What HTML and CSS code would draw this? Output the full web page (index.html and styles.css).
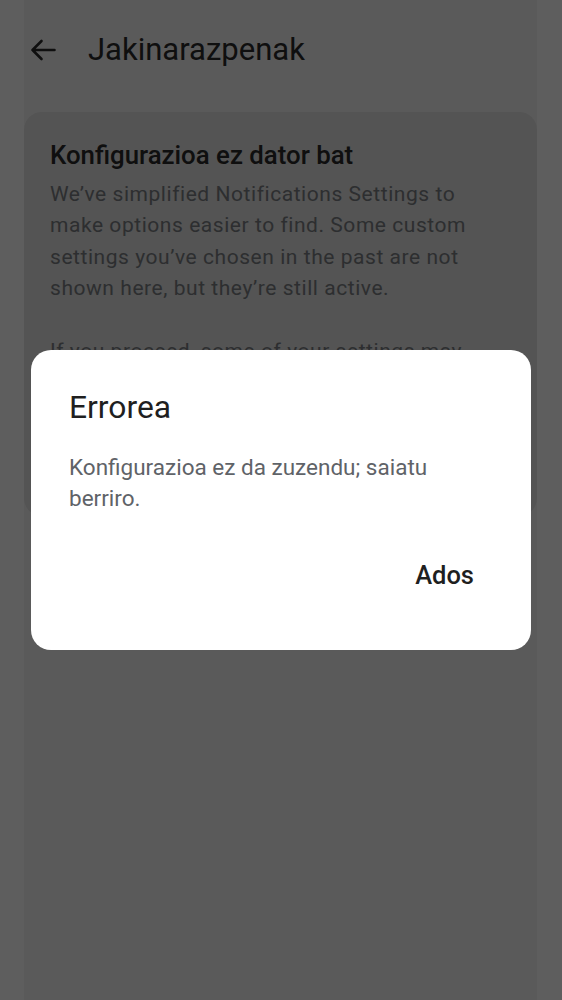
FILE: index.html
```html
<!DOCTYPE html>
<html lang="eu">
<head>
<meta charset="utf-8">
<title>Jakinarazpenak</title>
<link rel="stylesheet" href="styles.css">
</head>
<body>
<div class="column">
  <header class="appbar">
    <span class="back">
      <svg width="26" height="22" viewBox="0 0 26 22" aria-hidden="true">
        <path d="M24.5 11H2.5M11.5 2L2.5 11L11.5 20" fill="none" stroke="currentColor" stroke-width="2.6" stroke-linecap="round" stroke-linejoin="round"/>
      </svg>
    </span>
    <h1 class="appbar-title">Jakinarazpenak</h1>
  </header>
  <section class="card">
    <h2 class="card-title">Konfigurazioa ez dator bat</h2>
    <p class="card-text">We’ve simplified Notifications Settings to make options easier to find. Some custom settings you’ve chosen in the past are not shown here, but they’re still active.</p>
    <p class="card-text">If you proceed, some of your settings may change. Review them to make sure they match your preferences.</p>
  </section>
</div>
<div class="scrim">
  <div class="dialog" role="alertdialog">
    <h3 class="dialog-title">Errorea</h3>
    <p class="dialog-text">Konfigurazioa ez da zuzendu; saiatu berriro.</p>
    <div class="dialog-actions">
      <button class="dialog-btn">Ados</button>
    </div>
  </div>
</div>
</body>
</html>
```
FILE: styles.css
```css
* { box-sizing: border-box; }
html, body {
  margin: 0;
  padding: 0;
  background: #ffffff;
  font-family: Roboto, "Noto Sans", "Liberation Sans", sans-serif;
}
body { height: 1000px; overflow: hidden; }

.column {
  margin: 0 25px 0 24px;
  min-height: 1000px;
  background: #f4f4f4;
}

.appbar {
  height: 112px;
  display: flex;
  align-items: flex-start;
  padding-top: 28px;
}
.back {
  display: flex;
  align-items: center;
  justify-content: center;
  width: 26px;
  height: 44px;
  margin-left: 6px;
  color: #2a2a2a;
}
.appbar-title {
  margin: 0 0 0 32px;
  font-size: 31px;
  line-height: 44px;
  font-weight: 400;
  color: #2a2a2a;
}

.card {
  height: 404px;
  overflow: hidden;
  background: #e3e3e3;
  border-radius: 18px;
  padding: 27px 26px 0 26px;
}
.card-title {
  margin: 0 0 8px 0;
  font-size: 25.8px;
  line-height: 32px;
  font-weight: 500;
  color: #2a2a2a;
}
.card-text {
  max-width: 430px;
  margin: 0 0 31px 0;
  font-size: 21px;
  letter-spacing: 0.55px;
  line-height: 31.4px;
  color: #7a7e82;
}

.scrim {
  position: fixed;
  inset: 0;
  background: rgba(0, 0, 0, 0.63);
  display: flex;
  align-items: center;
  justify-content: center;
}
.dialog {
  width: 500px;
  background: #ffffff;
  border-radius: 20px;
  padding: 38px 38px 51px 38px;
}
.dialog-title {
  margin: 0 0 26px 0;
  font-size: 31.8px;
  line-height: 38px;
  font-weight: 400;
  color: #1f1f1f;
}
.dialog-text {
  max-width: 380px;
  margin: 0 0 37px 0;
  font-size: 22.5px;
  line-height: 31px;
  color: #5f6368;
}
.dialog-actions {
  display: flex;
  justify-content: flex-end;
}
.dialog-btn {
  border: 0;
  background: transparent;
  font-family: inherit;
  font-size: 25.5px;
  font-weight: 500;
  color: #1f1f1f;
  height: 48px;
  padding: 0 19px;
}
```
